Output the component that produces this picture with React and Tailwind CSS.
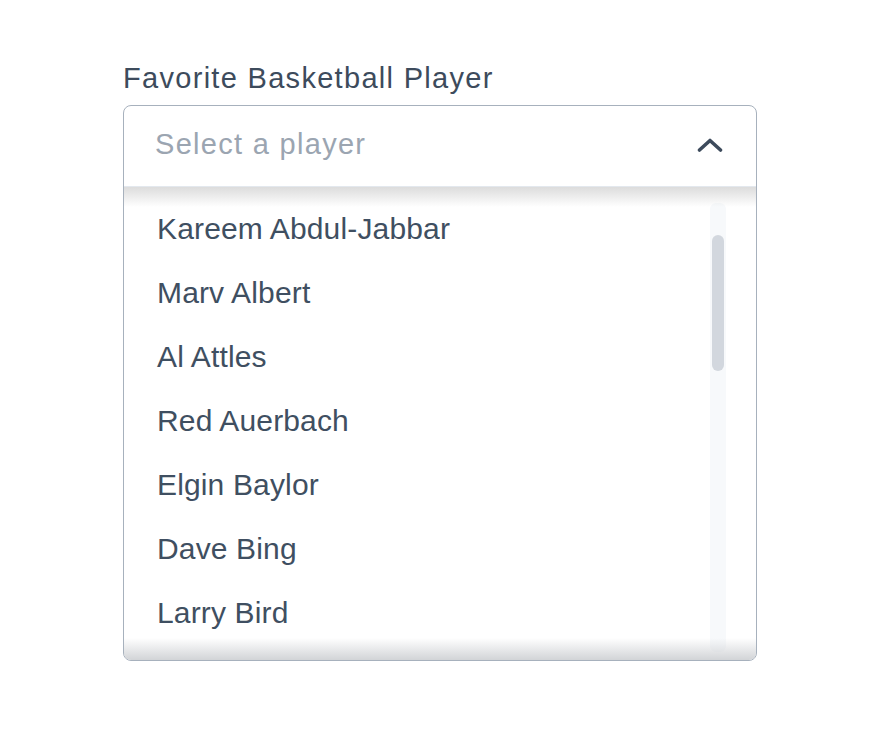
const players = [
  'Kareem Abdul-Jabbar',
  'Marv Albert',
  'Al Attles',
  'Red Auerbach',
  'Elgin Baylor',
  'Dave Bing',
  'Larry Bird',
];

function ChevronUp() {
  return (
    <svg width="26" height="16" viewBox="0 0 26 16" fill="none">
      <path d="M2.5 13 L13 3.5 L23.5 13" stroke="#3d4b5c" strokeWidth="3.6" strokeLinecap="round" strokeLinejoin="round" />
    </svg>
  );
}

export default function App() {
  return (
    <div className="min-h-screen bg-white pt-[60px]" style={{ fontFamily: '"Liberation Sans", Arial, sans-serif' }}>
      <div className="mx-auto w-[634px]">
        <label className="block text-[29px] leading-[36px] tracking-[1.3px] text-[#3d4b5c] mb-[9px]">Favorite Basketball Player</label>

        <div className="rounded-[8px] border-[1.5px] border-[#a7b1bd] bg-white overflow-hidden">
          {/* header */}
          <div className="flex items-center justify-between h-[81px] pb-[3px] pl-[31px] pr-[33px] border-b border-[#e3e8ee]">
            <span className="text-[29px] tracking-[1.3px] text-[#9ba5b1]">Select a player</span>
            <ChevronUp />
          </div>

          {/* list */}
          <div className="relative flex h-[473px]">
            <div className="pointer-events-none absolute inset-x-0 top-0 h-[20px] bg-gradient-to-b from-[#dcdcdc] to-transparent" />
            <div className="pointer-events-none absolute inset-x-0 bottom-0 h-[22px] bg-gradient-to-t from-[#d2d4d7] to-transparent" />

            <ul className="flex-1 overflow-hidden pt-[9px] pl-[33px]">
              {players.map((name) => (
                <li key={name} className="h-[64px] flex items-center text-[30px] tracking-[0.15px] text-[#3f4f61]">
                  {name}
                </li>
              ))}
            </ul>

            {/* scrollbar */}
            <div className="mt-[16px] mb-[8px] mr-[30px] w-[16px] rounded-[6px] bg-[#f7f9fb] flex justify-center">
              <div className="mt-[32px] w-[12px] h-[136px] rounded-full bg-[#d2d7de]" />
            </div>
          </div>
        </div>
      </div>
    </div>
  );
}
